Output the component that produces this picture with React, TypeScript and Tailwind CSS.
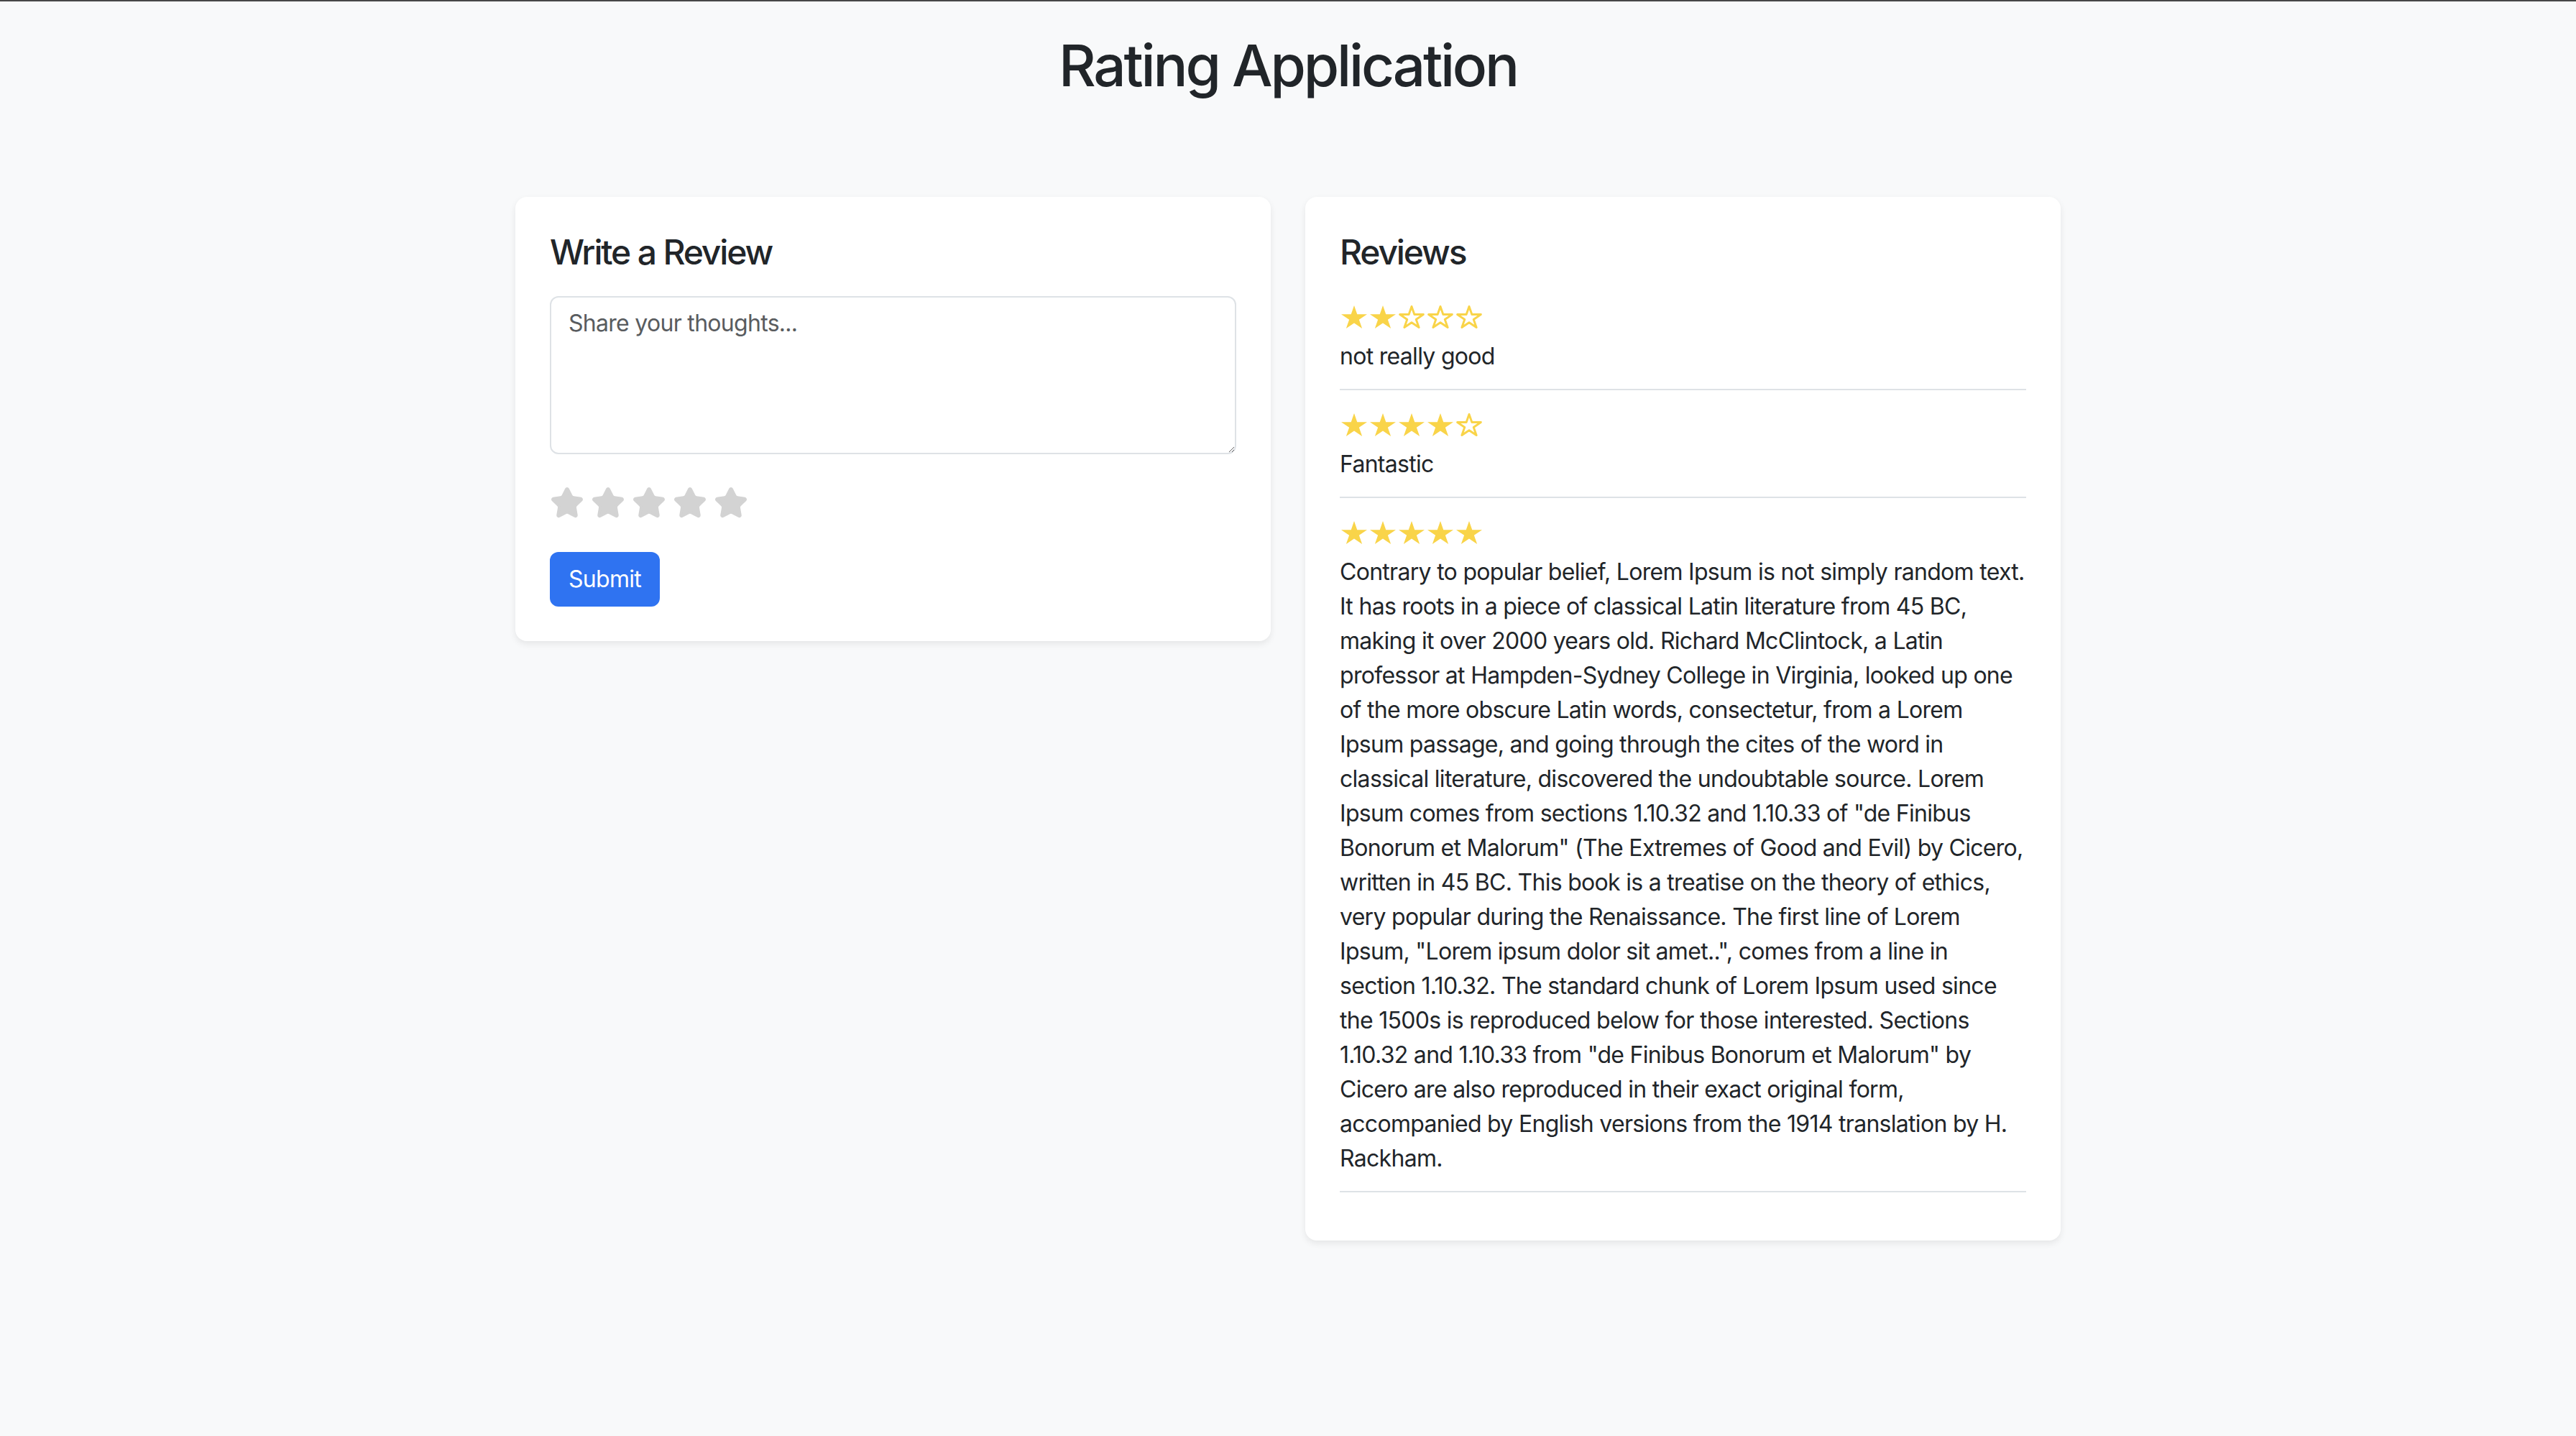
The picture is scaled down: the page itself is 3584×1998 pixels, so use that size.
import React from "react";

const FONT = { fontFamily: "Inter, 'Noto Sans', 'Liberation Sans', sans-serif" };

const LONG_LINES = [
  "Contrary to popular belief, Lorem Ipsum is not simply random text.",
  "It has roots in a piece of classical Latin literature from 45 BC,",
  "making it over 2000 years old. Richard McClintock, a Latin",
  "professor at Hampden-Sydney College in Virginia, looked up one",
  "of the more obscure Latin words, consectetur, from a Lorem",
  "Ipsum passage, and going through the cites of the word in",
  "classical literature, discovered the undoubtable source. Lorem",
  'Ipsum comes from sections 1.10.32 and 1.10.33 of "de Finibus',
  'Bonorum et Malorum" (The Extremes of Good and Evil) by Cicero,',
  "written in 45 BC. This book is a treatise on the theory of ethics,",
  "very popular during the Renaissance. The first line of Lorem",
  'Ipsum, "Lorem ipsum dolor sit amet..", comes from a line in',
  "section 1.10.32. The standard chunk of Lorem Ipsum used since",
  "the 1500s is reproduced below for those interested. Sections",
  '1.10.32 and 1.10.33 from "de Finibus Bonorum et Malorum" by',
  "Cicero are also reproduced in their exact original form,",
  "accompanied by English versions from the 1914 translation by H.",
  "Rackham.",
];

const reviews: { rating: number; lines: string[] }[] = [
  { rating: 2, lines: ["not really good"] },
  { rating: 4, lines: ["Fantastic"] },
  { rating: 5, lines: LONG_LINES },
];

const STAR_POINTS =
  "18,0 22.25,12.22 36,12.22 24.87,19.78 29.13,32 18,24.45 6.87,32 11.13,19.78 0,12.22 13.75,12.22";

function YellowStar({ filled }: { filled: boolean }) {
  if (filled) {
    return (
      <svg width="36" height="32" viewBox="0 0 36 32" className="block">
        <polygon points={STAR_POINTS} fill="#f9d449" />
      </svg>
    );
  }
  return (
    <svg width="36" height="32" viewBox="-1.6 -1.6 39.2 35.2" className="block">
      <polygon
        points={STAR_POINTS}
        fill="none"
        stroke="#f9d449"
        strokeWidth="3.2"
        strokeLinejoin="round"
      />
    </svg>
  );
}

function GrayStar() {
  return (
    <svg
      width="48"
      height="48"
      viewBox="0 0 24 24"
      fill="#d3d3d3"
      stroke="#d3d3d3"
      strokeWidth="2"
      strokeLinejoin="round"
      strokeLinecap="round"
      className="block"
    >
      <path d="M11.525 2.295a.53.53 0 0 1 .95 0l2.31 4.679a2.123 2.123 0 0 0 1.595 1.16l5.166.756a.53.53 0 0 1 .294.904l-3.736 3.638a2.123 2.123 0 0 0-.611 1.878l.882 5.14a.53.53 0 0 1-.771.56l-4.618-2.428a2.122 2.122 0 0 0-1.973 0L6.396 21.01a.53.53 0 0 1-.77-.56l.881-5.139a2.122 2.122 0 0 0-.611-1.879L2.16 9.795a.53.53 0 0 1 .294-.906l5.165-.755a2.122 2.122 0 0 0 1.597-1.16z" />
    </svg>
  );
}

export default function App() {
  return (
    <div
      className="min-h-[1998px] w-full bg-[#f8f9fa] text-[#212529] border-t-2 border-[#474747] tracking-[-0.022em]"
      style={FONT}
    >
      <h1 className="pt-[41px] text-center text-[80px] leading-[96px] font-medium tracking-[-0.04em]">
        Rating Application
      </h1>

      <div className="mt-[135px] flex items-start justify-center gap-[48px]">
        {/* Write a review */}
        <div className="w-[1051px] rounded-[16px] bg-white p-[48px] shadow-[0_4px_10px_rgba(0,0,0,0.08)]">
          <h4 className="mb-[32px] text-[48px] leading-[57.6px] font-medium tracking-[-0.045em]">
            Write a Review
          </h4>
          <textarea
            rows={4}
            placeholder="Share your thoughts..."
            className="block h-[220px] w-full rounded-[12px] border-2 border-[#dee2e6] bg-white px-[24px] py-[12px] text-[32px] leading-[48px] tracking-[-0.022em] text-[#212529] placeholder:text-[#595c5f] outline-none"
          />
          <div className="mt-[44px] flex gap-[9px]">
            {[0, 1, 2, 3, 4].map((i) => (
              <GrayStar key={i} />
            ))}
          </div>
          <button className="mt-[44px] block rounded-[12px] bg-[#2f73f1] px-[26px] py-[14px] text-[32px] leading-[48px] tracking-[-0.022em] text-white">
            Submit
          </button>
        </div>

        {/* Reviews */}
        <div className="w-[1051px] rounded-[16px] bg-white p-[48px] shadow-[0_4px_10px_rgba(0,0,0,0.08)]">
          <h4 className="mb-[32px] text-[48px] leading-[57.6px] font-medium tracking-[-0.045em]">
            Reviews
          </h4>
          {reviews.map((r, idx) => (
            <div key={idx} className="mb-[19px] border-b-2 border-[#dee2e6] pt-[13px] pb-[21px]">
              <div className="ml-[2px] flex gap-[4px]">
                {[1, 2, 3, 4, 5].map((n) => (
                  <YellowStar key={n} filled={n <= r.rating} />
                ))}
              </div>
              <p className="mt-[15px] text-[32px] leading-[48px] tracking-[-0.022em]">
                {r.lines.map((line, i) => (
                  <span key={i} className="block whitespace-nowrap">
                    {line}
                  </span>
                ))}
              </p>
            </div>
          ))}
        </div>
      </div>
    </div>
  );
}
